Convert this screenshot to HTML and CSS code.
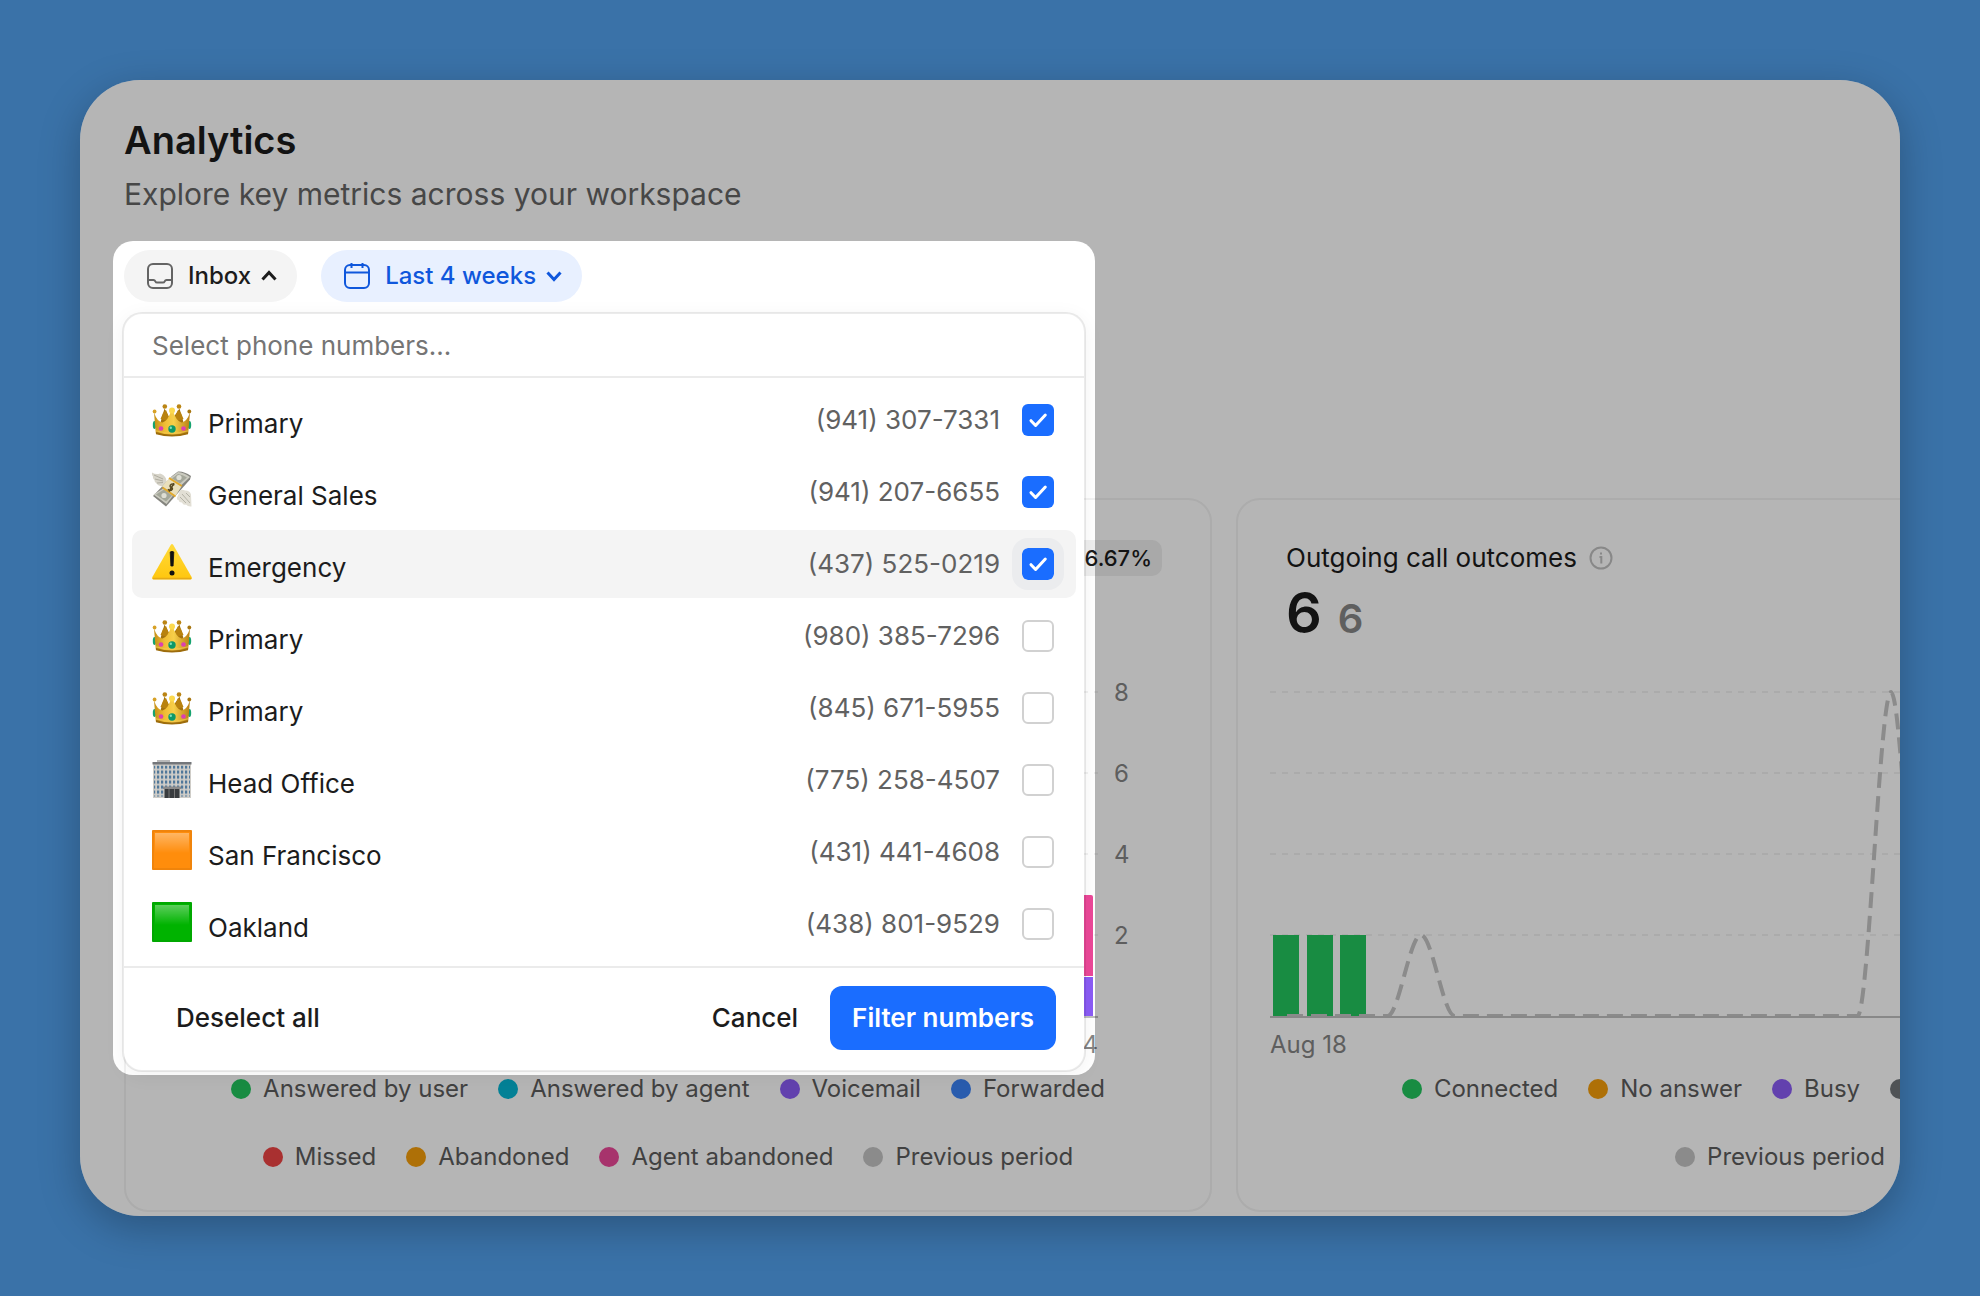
FILE: index.html
```html
<!DOCTYPE html>
<html lang="en">
<head>
<meta charset="utf-8">
<title>Analytics</title>
<link rel="stylesheet" href="styles.css">
</head>
<body>
<svg class="sprite" aria-hidden="true">
  <defs>
    <linearGradient id="gold" x1="0" y1="0" x2="1" y2="0">
      <stop offset="0" stop-color="#c58f17"/><stop offset=".3" stop-color="#f0bd35"/><stop offset=".55" stop-color="#f7cf4a"/><stop offset="1" stop-color="#b98012"/>
    </linearGradient>
    <linearGradient id="shine" x1="0" y1="0" x2="0" y2="1">
      <stop offset="0" stop-color="#fff" stop-opacity=".36"/><stop offset="1" stop-color="#fff" stop-opacity="0"/>
    </linearGradient>
    <linearGradient id="warn" x1="0" y1="0" x2="0" y2="1">
      <stop offset="0" stop-color="#ffdb3a"/><stop offset="1" stop-color="#ffc60e"/>
    </linearGradient>
    <symbol id="crown" viewBox="0 -1 40 40">
      <path d="M8 25 12.500 9.500 19 22 27.500 9.500 32 25z" fill="#a3720e"/>
      <path d="M8.500 20 11 14l3-3 5 12zM31.500 20 29 14l-3-3-5 12z" fill="#b8820f"/>
      <ellipse cx="2.500" cy="26" rx="1.700" ry="4" fill="#16a36f"/><ellipse cx="37.500" cy="26" rx="1.700" ry="4" fill="#16a36f"/>
      <path d="M2 13.500 3.800 34.500Q20 39.500 36.200 34.500L38 13.500Q35 22.500 29.500 23.500 24 22 21 12h-2q-3 10-8.500 11.500Q5 22.500 2 13.500z" fill="url(#gold)"/>
      <path d="M4 33q16 5 32 0v2.300q-16 4.400-32 0z" fill="#9d6c0c"/>
      <path d="M4 31.800q16 4.700 32 0" fill="none" stroke="#f3c64b" stroke-width=".8"/>
      <circle cx="20" cy="11.500" r="3" fill="#fcd94e"/><circle cx="12.800" cy="7.500" r="2.300" fill="#bb8514"/><circle cx="27" cy="7.500" r="2.300" fill="#bb8514"/>
      <circle cx="2.600" cy="12.500" r="1.900" fill="#d7a126"/><circle cx="37.300" cy="12.500" r="1.900" fill="#a87610"/>
      <circle cx="20" cy="30" r="3.700" fill="#0d9869"/><circle cx="18.800" cy="28.800" r="1.200" fill="#7fe0bb"/>
      <circle cx="9" cy="29.500" r="2.300" fill="#dc3fb2"/><circle cx="31.500" cy="29.500" r="2.300" fill="#dc3fb2"/>
    </symbol>
    <symbol id="money" viewBox="0 -1 40 40">
      <path d="M0 1.500Q4 4 8 2.500q4 1 6 5l1 5-4 3Q6 15 4 12q-1.500-1-1.600-3Q.5 7.500 1 5.500-.3 4 0 1.500z" fill="#d8d5ca"/>
      <path d="m2 4 9 4M3 8l8 2M5 12l6-.5" stroke="#a5a296" stroke-width=".8" fill="none"/>
      <path d="m20 5 6-4.500Q32 0 39 5l-1 3.500L14 35.500 1 25z" fill="#85857f"/>
      <path d="m18 7 8-6q6 .5 12 5L28 15.500 14.500 33 1.500 23.500 12 17z" fill="#cacabf"/>
      <path d="m20 7.500 6-4.500q5 .5 9 3.500l-7 6zM4 23.500l8-5 8 6-6 6z" fill="#a4a79a"/>
      <circle cx="27" cy="6.500" r="2.600" fill="#deded4"/><circle cx="12" cy="24.500" r="2.600" fill="#deded4"/>
      <path d="m17 7.500 12.500 8L23.500 25 10 15.500z" fill="#e9dfbb"/>
      <path d="m17 7 12.800 8M10.500 16.500 23.500 25.500" stroke="#e2a92c" stroke-width="2" fill="none"/>
      <path d="M22.300 14.200q-2.500-2.400-4 0-.7 1.700 1 2.300t.8 2.100q-1.900 2.100-4.200-.3M22 12.200 17 20.500" fill="none" stroke="#55461f" stroke-width="1.500"/>
      <path d="M28 19.500q2-1.500 5 0 5 0 6 4l.5 12Q36 36 34 33.500q-3 .8-4-2-3 .2-3.500-2.500-2 0-1.500-2.500 2-4 3-7z" fill="#e2dfd5"/>
      <path d="m30 23 8 9M28 26l6 6M34 22l4 4" stroke="#aaa79b" stroke-width=".8" fill="none"/>
    </symbol>
    <symbol id="warning" viewBox="0 0 40 40">
      <path d="M18.700 3q1.300-2.200 2.600 0L39.600 35Q40.500 37.500 38 37.500H2Q-.5 37.500.4 35z" fill="url(#warn)"/>
      <path d="M1 36.500h38" stroke="#e5aa17" stroke-width="1.400"/>
      <path d="M18.200 10q1.800-1.300 3.600 0l-.7 14h-2.200z" fill="#111" stroke="#111" stroke-width=".8"/><circle cx="20" cy="31" r="2.500" fill="#111"/>
    </symbol>
    <pattern id="panes" width="4" height="5" patternUnits="userSpaceOnUse">
      <rect width="4" height="5" fill="#cfcdc8"/><rect x="1" y="1" width="2.200" height="3.200" fill="#51789a"/>
    </pattern>
    <symbol id="office" viewBox="0 -1.500 40 40">
      <path d="M5 .5h13v3H5z" fill="#b9b9b9"/><path d="M1 4h38v34.500H1z" fill="#cfcdc8"/>
      <path d="M2 6h36v31H2z" fill="url(#panes)"/><path d="M.5 2.500h39v2.500H.5z" fill="#74777b"/>
      <path d="M11 27h18v2.500H11z" fill="#8b8b8b"/><path d="M12.500 29.500h15v9h-15z" fill="#393c3f"/>
      <path d="M17 29.500v9M22.500 29.500v9" stroke="#777" stroke-width="1"/>
    </symbol>
    <symbol id="square" viewBox="0 0 40 40">
      <rect width="40" height="40" rx="1" fill="currentColor"/>
      <rect x="1" y="1" width="38" height="38" fill="none" stroke="#000" stroke-opacity=".06" stroke-width="2"/>
      <rect x="3" y="3" width="34" height="20" fill="url(#shine)"/>
    </symbol>
  </defs>
</svg>

<main class="panel">
  <header class="heading">
    <h1 class="title">Analytics</h1>
    <p class="subtitle">Explore key metrics across your workspace</p>
  </header>

  <div class="filters">
    <div class="spotlight">
      <div class="chips">
        <button class="chip" type="button" aria-expanded="true">
          <svg class="chip-icon" viewBox="0 0 28 28"><rect x="2" y="2" width="24" height="24" rx="5"/><path d="M2 18h5.500q1.200 0 1.800 1.300t1.800 1.300h5.800q1.200 0 1.800-1.300T20.500 18H26"/></svg>
          Inbox
          <svg class="chevron" viewBox="0 0 20 20"><path d="m3.500 13.500 6.500-7 6.500 7"/></svg>
        </button>
        <button class="chip chip-active" type="button">
          <svg class="chip-icon" viewBox="0 0 28 28"><rect x="2" y="3" width="24" height="23" rx="5"/><path d="M2 10.500h24M8.500 1v5M19.500 1v5"/></svg>
          Last 4 weeks
          <svg class="chevron" viewBox="0 0 20 20"><path d="m3.500 6.500 6.500 7 6.500-7"/></svg>
        </button>
      </div>

      <form class="popover">
        <input class="search" type="text" placeholder="Select phone numbers..." aria-label="Select phone numbers">
        <ul class="numbers">
          <li><label class="row"><svg class="emoji"><use href="#crown"/></svg><span class="name">Primary</span><span class="phone">(941) 307-7331</span><input class="tick" type="checkbox" checked></label></li>
          <li><label class="row"><svg class="emoji"><use href="#money"/></svg><span class="name">General Sales</span><span class="phone">(941) 207-6655</span><input class="tick" type="checkbox" checked></label></li>
          <li><label class="row row-hover"><svg class="emoji"><use href="#warning"/></svg><span class="name">Emergency</span><span class="phone">(437) 525-0219</span><input class="tick" type="checkbox" checked></label></li>
          <li><label class="row"><svg class="emoji"><use href="#crown"/></svg><span class="name">Primary</span><span class="phone">(980) 385-7296</span><input class="tick" type="checkbox"></label></li>
          <li><label class="row"><svg class="emoji"><use href="#crown"/></svg><span class="name">Primary</span><span class="phone">(845) 671-5955</span><input class="tick" type="checkbox"></label></li>
          <li><label class="row"><svg class="emoji"><use href="#office"/></svg><span class="name">Head Office</span><span class="phone">(775) 258-4507</span><input class="tick" type="checkbox"></label></li>
          <li><label class="row"><svg class="emoji orange"><use href="#square"/></svg><span class="name">San Francisco</span><span class="phone">(431) 441-4608</span><input class="tick" type="checkbox"></label></li>
          <li><label class="row"><svg class="emoji green"><use href="#square"/></svg><span class="name">Oakland</span><span class="phone">(438) 801-9529</span><input class="tick" type="checkbox"></label></li>
        </ul>
        <div class="actions">
          <button class="button deselect" type="reset">Deselect all</button>
          <button class="button" type="button">Cancel</button>
          <button class="button button-primary" type="submit">Filter numbers</button>
        </div>
      </form>
    </div>
  </div>

  <div class="cards">
    <section class="card">
      <div class="card-head"><span class="change">66.67%</span></div>
      <div class="totals"></div>
      <div class="chart">
        <svg class="plot" viewBox="0 0 940 366">
          <path class="grid" d="M0 40H940M0 121H940M0 202H940M0 283H940"/>
          <path d="M909 324V245q0-2 2-2h22q2 0 2 2v79z" fill="#ec4899"/>
          <path d="M909 325h26v39h-26z" fill="#8b5cf6"/>
          <path class="axis" d="M0 365H940"/>
        </svg>
        <div class="scale"><span>8</span><span>6</span><span>4</span><span>2</span></div>
      </div>
      <div class="dates dates-end">Sep 14</div>
      <ul class="legend">
        <li class="key c-green">Answered by user</li>
        <li class="key c-cyan">Answered by agent</li>
        <li class="key c-violet">Voicemail</li>
        <li class="key c-blue">Forwarded</li>
        <li class="key c-red">Missed</li>
        <li class="key c-amber">Abandoned</li>
        <li class="key c-pink">Agent abandoned</li>
        <li class="key c-grey">Previous period</li>
      </ul>
    </section>

    <section class="card">
      <div class="card-head">
        <h2 class="card-title">Outgoing call outcomes</h2>
        <svg class="info" viewBox="0 0 24 24"><circle cx="12" cy="12" r="10.500"/><path d="M10.500 11H12.300v6.500M12 6.500v2"/></svg>
      </div>
      <div class="totals"><strong class="total">6</strong><span class="total-before">6</span></div>
      <div class="chart">
        <svg class="plot" viewBox="0 0 940 366">
          <path class="grid" d="M0 40H940M0 121H940M0 202H940M0 283H940"/>
          <path d="M3 283h26v81H3zM37 283h26v81H37zM70 283h26v81H70z" fill="#22c55e"/>
          <path class="trend" d="M17 364H117.500C128.700 364 139.800 283 151 283S173.400 364 184.600 364H587.500C598.600 364 609.800 40 621 40S643.400 364 654.600 364H923"/>
          <path class="axis" d="M0 365H940"/>
        </svg>
      </div>
      <div class="dates">Aug 18</div>
      <ul class="legend">
        <li class="key c-green">Connected</li>
        <li class="key c-amber">No answer</li>
        <li class="key c-violet">Busy</li>
        <li class="key key-rest c-slate"></li>
        <li class="key c-grey">Previous period</li>
      </ul>
    </section>
  </div>
</main>
</body>
</html>
```

FILE: styles.css
```css
* { box-sizing: border-box; }

body {
  margin: 0;
  padding: 80px;
  background: #3a72a8;
  color: #1c1c1c;
  font-family: Inter, "Liberation Sans", sans-serif;
  font-size: 26px;
  line-height: 32px;
}

h1, h2, p, ul { margin: 0; padding: 0; }
ul { list-style: none; }
button, input { font: inherit; color: inherit; }
button { border: 0; background: none; white-space: nowrap; cursor: pointer; }
.sprite { position: absolute; width: 0; height: 0; }

.panel {
  padding: 36px 44px 4px;
  overflow: hidden;
  background: #fff;
  border-radius: 60px;
  box-shadow: 0 12px 40px rgba(0, 0, 0, .25);
}

.heading { display: grid; gap: 12px; }
.title { font-size: 38px; line-height: 48px; font-weight: 600; }
.subtitle { font-size: 30px; line-height: 36px; color: #646464; }

/* Filter bar: the spotlight dims everything outside its own box */
.filters { position: relative; height: 52px; margin-top: 38px; }
.spotlight {
  position: absolute;
  z-index: 1;
  top: -9px;
  left: -11px;
  width: 982px;
  padding: 9px 9px 3px;
  border-radius: 20px;
  box-shadow: 0 0 0 3000px rgba(0, 0, 0, .29);
}
.chips { display: flex; gap: 24px; padding-left: 2px; }
.chip {
  display: flex;
  align-items: center;
  height: 52px;
  padding: 0 18px 0 22px;
  border-radius: 26px;
  background: #f4f4f4;
  font-size: 24px;
  font-weight: 500;
}
.chip svg { fill: none; stroke: currentColor; }
.chip-icon { width: 28px; height: 28px; margin-right: 14px; stroke-width: 2; color: #646464; overflow: visible; }
.chevron { width: 20px; height: 20px; margin-left: 8px; stroke-width: 3; }
.chip-active, .chip-active .chip-icon { color: #0f57dc; }
.chip-active { background: #e8f0ff; }

.popover {
  margin-top: 10px;
  border: 2px solid rgba(0, 0, 0, .08);
  border-radius: 20px;
  background: #fff;
  background-clip: padding-box;
  box-shadow: 0 4px 20px rgba(0, 0, 0, .05);
}
.search {
  display: block;
  width: 100%;
  height: 64px;
  padding: 0 28px;
  border: 0;
  border-bottom: 2px solid #ebebeb;
  border-radius: 18px 18px 0 0;
  outline: 0;
  background: none;
}
.search::placeholder { color: #757575; opacity: 1; }

.numbers { display: grid; gap: 4px; padding: 8px; }
.row { display: flex; align-items: center; height: 68px; padding: 0 22px 0 20px; border-radius: 10px; }
.row-hover { background: #f4f4f4; }
.emoji { flex: none; width: 40px; height: 40px; margin: 0 16px 4px 0; }
.orange { color: #ff8d0c; }
.green { color: #00b300; }
.name { flex: 1; padding-top: 8px; }
.phone { margin-right: 22px; color: #616161; }
.tick {
  appearance: none;
  width: 32px;
  height: 32px;
  margin: 0;
  border: 2px solid #d1d1d1;
  border-radius: 6px;
  background: #fff;
}
.tick:checked {
  border: 0;
  background: #1a6dff url("data:image/svg+xml,%3Csvg xmlns='http://www.w3.org/2000/svg' viewBox='0 0 32 32' fill='none' stroke='white' stroke-width='3' stroke-linecap='round' stroke-linejoin='round'%3E%3Cpath d='M9 16.700 13.600 21.500 23.300 11'/%3E%3C/svg%3E");
}
.row-hover .tick { outline: 10px solid #ebecee; }

.actions {
  display: flex;
  gap: 10px;
  padding: 18px 28px 20px 30px;
  border-top: 2px solid #ebebeb;
}
.button { height: 64px; padding: 0 22px; border-radius: 12px; font-weight: 500; }
.deselect { margin-right: auto; }
.button-primary { background: #1a6dff; color: #fff; font-weight: 600; }

.cards { display: grid; grid-template-columns: repeat(2, 1088px); gap: 24px; margin-top: 196px; }
.card { padding: 40px 32px 39px; border: 2px solid #f2f2f2; border-radius: 24px; }
.card-head { display: flex; align-items: center; gap: 12px; height: 36px; padding: 0 16px; }
.card-title { font-size: 26px; font-weight: 400; }
.info { width: 24px; height: 24px; fill: none; stroke: #c0c0c0; stroke-width: 2; }
.change {
  margin-left: auto;
  padding: 0 10px;
  border-radius: 10px;
  background: #eee;
  font-size: 22px;
  line-height: 36px;
  font-weight: 500;
}
.totals { display: flex; align-items: baseline; gap: 16px; height: 60px; margin: 7px 0 9px; padding: 0 16px; font-weight: 600; line-height: 60px; }
.total { font-size: 56px; font-weight: 600; }
.total-before { font-size: 40px; color: #868686; }

.chart { display: flex; gap: 16px; }
.plot { width: 940px; height: 366px; flex: none; }
.grid { stroke: #f1f1f1; stroke-width: 2; stroke-dasharray: 6 6; }
.axis { stroke: #c0c0c0; stroke-width: 2; }
.trend { fill: none; stroke: #c4c4c4; stroke-width: 4; stroke-dasharray: 16 8; }
.scale { display: grid; height: 324px; font-size: 24px; line-height: 81px; color: #858585; }
.dates { width: 940px; margin-top: 13px; font-size: 24px; line-height: 28px; color: #858585; }
.dates-end { text-align: right; }

.legend {
  display: flex;
  flex-wrap: wrap;
  justify-content: center;
  gap: 40px 30px;
  margin-top: 16px;
  padding: 0 60px;
  font-size: 24px;
  line-height: 28px;
  color: #5c5c5c;
}
.key { display: flex; align-items: center; gap: 12px; white-space: nowrap; }
.key::before { content: ""; width: 20px; height: 20px; border-radius: 50%; background: var(--dot); }
.key-rest { width: 268px; }
.c-green { --dot: #22c55e; }
.c-cyan { --dot: #06b6d4; }
.c-violet { --dot: #8b5cf6; }
.c-blue { --dot: #3b82f6; }
.c-red { --dot: #ef4444; }
.c-amber { --dot: #f59e0b; }
.c-pink { --dot: #ec4899; }
.c-slate { --dot: #707478; }
.c-grey { --dot: #c4c4c4; }
```
